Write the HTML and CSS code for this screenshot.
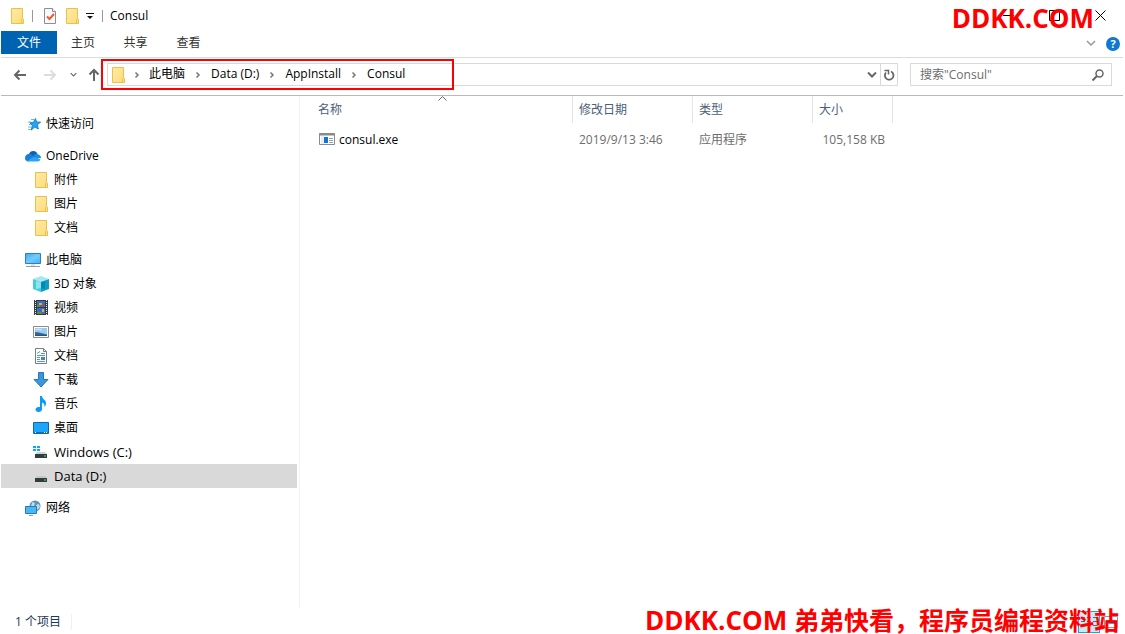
FILE: index.html
```html
<!DOCTYPE html>
<html lang="zh-CN">
<head>
  <meta charset="UTF-8" />
  <meta name="viewport" content="width=device-width, initial-scale=1.0" />
  <title>Consul</title>
  <link rel="stylesheet" href="styles.css">
</head>
<body>
  <svg class="defs" aria-hidden="true">
    <defs>
      <linearGradient id="gFolder" x2="1" y2="1"><stop offset="0" stop-color="#ffeaa6"/><stop offset="1" stop-color="#fcdc7a"/></linearGradient>
      <linearGradient id="gScreen" x2="1" y2="1"><stop offset="0" stop-color="#3aa9f5"/><stop offset="0.5" stop-color="#72cbff"/><stop offset="1" stop-color="#45b0f7"/></linearGradient>
    </defs>
    <symbol id="folder" viewBox="0 0 16 16">
      <path d="M2.500.5h11v9.500l.5 1v4.500H2.500z" fill="url(#gFolder)" stroke="#e8c24a"/>
      <path d="M12.500 15.500v-4l1-1 1 1v4z" fill="#fbe08a" stroke="#e8c24a"/>
    </symbol>
    <symbol id="crumb" viewBox="0 0 6 8">
      <path d="M1.500 1.500 4 4 1.500 6.500" fill="none" stroke="#777" stroke-width="1.500"/>
    </symbol>
    <symbol id="down" viewBox="0 0 10 6">
      <path d="M1 1l4 4 4-4" fill="none" stroke="currentColor" stroke-width="1.500"/>
    </symbol>
  </svg>

  <div class="window">
    <header class="titlebar">
      <svg class="icon"><use href="#folder"/></svg>
      <span class="bar"></span>
      <button class="quick" aria-label="属性">
        <svg class="icon" viewBox="0 0 16 16">
          <path d="M2.500.5h8l3 3v12h-11z" fill="#f7f9fc" stroke="#8a8f96"/>
          <path d="M10.500.5v3h3" fill="#fff" stroke="#8a8f96"/>
          <path d="M5 8.500l2.500 2.500L12 6" fill="none" stroke="#f05a28" stroke-width="2"/>
        </svg>
      </button>
      <button class="quick" aria-label="新建文件夹"><svg class="icon"><use href="#folder"/></svg></button>
      <button class="quick custom" aria-label="自定义快速访问工具栏">
        <svg width="8" height="8" viewBox="0 0 8 8"><path d="M0 .5h8" stroke="#111"/><path d="M1 3h6L4 6z" fill="#111"/></svg>
      </button>
      <span class="bar bar-title"></span>
      <h1 class="caption">Consul</h1>
      <div class="controls">
        <button aria-label="最小化"><svg width="11" height="11" viewBox="0 0 11 11"><path d="M0 5.500h11" stroke="#000"/></svg></button>
        <button aria-label="最大化"><svg width="11" height="11" viewBox="0 0 11 11"><path d="M.5.5h10v10H.5z" fill="none" stroke="#000"/></svg></button>
        <button aria-label="关闭"><svg width="11" height="11" viewBox="0 0 11 11"><path d="M.5.5l10 10M10.500.5l-10 10" stroke="#000"/></svg></button>
      </div>
    </header>

    <nav class="ribbon">
      <button class="tab active">文件</button>
      <button class="tab">主页</button>
      <button class="tab">共享</button>
      <button class="tab">查看</button>
      <button class="expand" aria-label="展开功能区"><svg width="10" height="6"><use href="#down"/></svg></button>
      <button class="help" aria-label="帮助">?</button>
    </nav>

    <div class="navrow">
      <button class="arrow back" aria-label="后退"><svg width="14" height="12" viewBox="0 0 14 12"><path d="M13 6H2M6.500 1.500L2 6l4.500 4.500" fill="none" stroke="currentColor" stroke-width="2"/></svg></button>
      <button class="arrow forward" aria-label="前进" disabled><svg width="14" height="12" viewBox="0 0 14 12"><path d="M1 6h11M7.500 1.500L12 6l-4.500 4.500" fill="none" stroke="currentColor" stroke-width="2"/></svg></button>
      <button class="arrow recent" aria-label="最近浏览的位置"><svg width="7" height="5"><use href="#down"/></svg></button>
      <button class="arrow up" aria-label="向上"><svg width="12" height="14" viewBox="0 0 12 14"><path d="M6 13V2M1.500 6.500L6 2l4.500 4.500" fill="none" stroke="currentColor" stroke-width="2"/></svg></button>
      <div class="address">
        <svg class="icon"><use href="#folder"/></svg>
        <svg class="sep"><use href="#crumb"/></svg>
        <a href="#">此电脑</a>
        <svg class="sep"><use href="#crumb"/></svg>
        <a href="#">Data (D:)</a>
        <svg class="sep"><use href="#crumb"/></svg>
        <a href="#">AppInstall</a>
        <svg class="sep"><use href="#crumb"/></svg>
        <a href="#">Consul</a>
        <button class="history" aria-label="以前的位置"><svg width="10" height="6" viewBox="0 0 10 6"><path d="M1 .5l4 4 4-4" fill="none" stroke="currentColor" stroke-width="2"/></svg></button>
        <button class="refresh" aria-label="刷新">
          <svg width="12" height="12" viewBox="0 0 12 12"><path d="M8 2.500A4.300 4.300 0 1 1 3 3.500" fill="none" stroke="#666" stroke-width="1.800"/><path d="M1.500 1.500h4v4" fill="none" stroke="#666" stroke-width="1.500"/></svg>
        </button>
        <div class="highlight"></div>
      </div>
      <div class="search">
        <input type="text" aria-label="搜索" placeholder='搜索"Consul"'>
        <svg width="12" height="12" viewBox="0 0 12 12"><circle cx="7.500" cy="4.500" r="3.500" fill="none" stroke="#666" stroke-width="1.500"/><path d="M5 7L.5 11.500" stroke="#666" stroke-width="2"/></svg>
      </div>
    </div>

    <main class="content">
      <aside class="tree">
        <ul>
          <li class="root"><a href="#">
            <svg class="icon" viewBox="0 0 16 16"><path d="M10.500 2.500l1 3.500 4 .2-3.200 2.500 1 4.300-3.500-2-3.500 3 1-4.500-2.500-2.800 3.500-.2z" fill="#2ba4ee" stroke="#1784cf"/><path d="M6 3.500h3M3 6h3M4 8.500h2M3 11h3M3 13.500h3" stroke="#6fb9e8"/></svg>
            快速访问</a></li>
        </ul>
        <ul>
          <li class="root"><a href="#">
            <svg class="icon" viewBox="0 0 16 16"><path d="M4 6a4.500 4.500 0 0 1 8.500 0L14 10H3z" fill="#0a62b8"/><path d="M4 6C1.500 6 0 8 0 10s1.500 3.500 3.500 3.500L9 8.500C7.500 6.500 6 6 4 6z" fill="#1680d6"/><path d="M9 7.500c1-2 3-2.200 4-1 2 .2 3 2 3 3.500l-5 .5z" fill="#1b8de0"/><path d="M2 13l7-4.500 6.500 3c-.5 1.300-1.500 2-3 2h-9z" fill="#2ba5ec"/></svg>
            OneDrive</a></li>
          <li><a href="#"><svg class="icon"><use href="#folder"/></svg>附件</a></li>
          <li><a href="#"><svg class="icon"><use href="#folder"/></svg>图片</a></li>
          <li><a href="#"><svg class="icon"><use href="#folder"/></svg>文档</a></li>
        </ul>
        <ul>
          <li class="root"><a href="#">
            <svg class="icon" viewBox="0 0 16 16"><path d="M.5 1.500h15v10H.5z" fill="url(#gScreen)" stroke="#2f80b8"/><path d="M6 13h4" stroke="#b8c4cc"/><path d="M1 14.500h14" stroke="#8f9ba5"/></svg>
            此电脑</a></li>
          <li><a href="#">
            <svg class="icon" viewBox="0 0 16 16"><path d="M0 3l8-3 8 3-8 3z" fill="#a4e9ef"/><path d="M0 3l8 3v10l-8-3z" fill="#45cbd9"/><path d="M16 3L8 6v10l8-3z" fill="#0b9fc4"/><path d="M3 5l5 1v6l-5 1z" fill="#8ce4eb"/><path d="M8 6l4-1v8l-4-1z" fill="#0787b5"/></svg>
            3D 对象</a></li>
          <li><a href="#">
            <svg class="icon" viewBox="0 0 16 16"><path d="M1 0h14v15H1z" fill="#3a3a3a"/><path d="M2.500 0v15M13.500 0v15" stroke="#e6e6e6" stroke-dasharray="1 1"/><path d="M4 1h8v6H4zM4 8h8v6H4z" fill="#2e6fd0"/><path d="M6 3h3v2H6zM9 9h2v3H9z" fill="#f1a92c"/><path d="M4 5h3v2H4zM4 12h5v2H4z" fill="#5d8f3d"/><path d="M9 4h2v2H9z" fill="#c4403c"/></svg>
            视频</a></li>
          <li><a href="#">
            <svg class="icon" viewBox="0 0 16 16"><path d="M.5 2.500h15v11H.5z" fill="#fff" stroke="#8c8c8c"/><path d="M2 4h12v8H2z" fill="#9acbf3"/><path d="M2 8l4 .5 8 2V12H2z" fill="#34688c"/><path d="M2 11h12v1H2z" fill="#24577a"/><path d="M3 6c2-2 4 0 6 0" fill="none" stroke="#e9f5ff"/></svg>
            图片</a></li>
          <li><a href="#">
            <svg class="icon" viewBox="0 0 16 16"><path d="M2.500.5h8l3 3v12h-11z" fill="#fff" stroke="#7d7d7d"/><path d="M10.500.5v3h3" fill="none" stroke="#7d7d7d"/><path d="M4 5.500l3-2M8 5.500h4M4 7.500h8M4 9.500h3M4 11.500h3M4 13.500h8" stroke="#4f9cc9"/><path d="M8 9h4v3H8z" fill="#4189bd"/></svg>
            文档</a></li>
          <li><a href="#">
            <svg class="icon" viewBox="0 0 16 16"><path d="M5.500.5h5v7h4.500L8 15 1 7.500h4.500z" fill="#3a96dd" stroke="#2678bd"/></svg>
            下载</a></li>
          <li><a href="#">
            <svg class="icon" viewBox="0 0 16 16"><path d="M7 0h2c0 3 4 4 4 7 0 1.500-.5 3-1.500 4 .2-3-1-4-2.500-4.500V13c0 1.700-1.500 3-3.500 3S2.500 15 2.500 13.500 4 11 5.500 11H7z" fill="#0a9bf5"/></svg>
            音乐</a></li>
          <li><a href="#">
            <svg class="icon" viewBox="0 0 16 16"><path d="M.5 2.500h15v11H.5z" fill="#1ea4fb" stroke="#0a69ae"/><path d="M1 12.500h14" stroke="#0872bd"/><path d="M2 12.500h1M11 12.500h1M13 12.500h1" stroke="#fff"/></svg>
            桌面</a></li>
          <li><a href="#" class="en">
            <svg class="icon" viewBox="0 0 16 16"><path d="M0 2h3v2H0zM4 2h3v2H4zM0 5h3v2H0zM4 5h3v2H4z" fill="#0caaf0"/><path d="M4 8h8l2 2.500H2z" fill="#d0d3d5"/><path d="M2 10h12v4H2z" fill="#363b3e"/><path d="M11 12h2" stroke="#42dc7c"/></svg>
            Windows (C:)</a></li>
          <li class="selected"><a href="#" class="en">
            <svg class="icon" viewBox="0 0 16 16"><path d="M4 8h8l2 2.500H2z" fill="#c4c7c9"/><path d="M2 10h12v4H2z" fill="#363b3e"/><path d="M11 12h2" stroke="#42dc7c"/></svg>
            Data (D:)</a></li>
        </ul>
        <ul>
          <li class="root"><a href="#">
            <svg class="icon" viewBox="0 0 16 16"><circle cx="10" cy="6" r="5.500" fill="#5f94b8"/><path d="M7 2l3 1-1 3-3 1zM11 5l3-1 1 3-3 3z" fill="#c2dbe8"/><path d="M.5 6.500h11v7H.5z" fill="#49b7f5" stroke="#1f7db8"/><path d="M4 15.500h4" stroke="#7aa7c2"/></svg>
            网络</a></li>
        </ul>
      </aside>

      <section class="files">
        <svg class="sort" viewBox="0 0 9 5"><path d="M.5 4.500l4-4 4 4" fill="none" stroke="#666"/></svg>
        <table>
          <colgroup><col class="c-name"><col class="c-date"><col class="c-type"><col class="c-size"></colgroup>
          <thead>
            <tr><th>名称</th><th>修改日期</th><th>类型</th><th>大小</th></tr>
          </thead>
          <tbody>
            <tr>
              <td class="name"><div class="file">
                <svg class="icon" viewBox="0 0 16 16"><path d="M.5 1.500h15v11H.5z" fill="#fff" stroke="#858b90"/><path d="M0 2.500h16" stroke="#858b90" stroke-width="2"/><path d="M2 4h3v8H2z" fill="#e8eef3"/><path d="M5 5h4v6H5z" fill="#0a76d8"/><path d="M10 6.500h4M10 8.500h4M10 10.500h4" stroke="#9a9fa4"/></svg>
                consul.exe</div></td>
              <td>2019/9/13 3:46</td>
              <td>应用程序</td>
              <td class="size">105,158 KB</td>
            </tr>
          </tbody>
        </table>
      </section>
    </main>

    <footer class="status">
      <span class="count">1 个项目</span>
      <button class="view on" aria-label="详细信息"><svg width="16" height="14" viewBox="0 0 16 14"><path d="M0 2.500h4M6 2.500h4M12 2.500h4M0 6.500h4M6 6.500h4M12 6.500h4M0 10.500h4M6 10.500h4M12 10.500h4" stroke="#5a6b78"/></svg></button>
      <button class="view" aria-label="大图标"><svg width="14" height="12" viewBox="0 0 14 12"><path d="M.5.5h13v11H.5z" fill="#fff" stroke="#7f9db5"/><path d="M2 4h10v4H2z" fill="#4a9be0"/></svg></button>
    </footer>
  </div>

  <div class="mark mark-top">DDKK.COM</div>
  <div class="mark mark-bottom">DDKK.COM <span>弟弟快看，程序员编程资料站</span></div>
</body>
</html>
```
FILE: styles.css
```css
* { box-sizing: border-box; }
body {
  margin: 0; background: #fff; color: #000; overflow: hidden;
  font-family: "Open Sans", "Noto Sans CJK SC", sans-serif;
  font-size: 12px; line-height: 16px;
}
button { font: inherit; color: inherit; background: none; border: 0; padding: 0; display: flex; align-items: center; justify-content: center; }
a { color: inherit; text-decoration: none; }
ul { list-style: none; margin: 0; padding: 0; }
svg { display: block; flex: none; }
.defs { position: absolute; width: 0; height: 0; }
.icon { width: 16px; height: 16px; }
.en { font-size: 13px; }

.window { display: flex; flex-direction: column; height: 100vh; padding: 0 2px 0 1px; }

/* title bar */
.titlebar { display: flex; align-items: center; height: 31px; padding-left: 8px; }
.bar { width: 1px; height: 12px; background: #999; margin: 0 9px 0 7px; }
.quick { margin-right: 6px; }
.quick.custom { margin: 2px 0 0; }
.bar-title { margin: 0 7px 0 8px; }
.caption { margin: 0; font-size: 12px; font-weight: normal; }
.controls { display: flex; margin-left: auto; }
.controls button { width: 46px; height: 31px; }

/* ribbon tabs */
.ribbon { display: flex; align-items: center; height: 27px; padding-bottom: 3px; border-bottom: 1px solid #dadbdc; color: #333; }
.tab { height: 23px; width: 53px; padding-top: 1px; }
.tab.active { width: 56px; background: #0063b1; color: #fff; }
.tab.active + .tab { width: 52px; }
.expand { margin-left: auto; color: #999; }
.help {
  width: 14px; height: 14px; margin: 2px 3px 0 10px; border-radius: 50%;
  background: #0f78d0; color: #fff; font-size: 11px; font-weight: bold; line-height: 14px;
}

/* address and search */
.navrow { display: flex; align-items: center; height: 38px; padding: 0 11px 4px 12px; border-bottom: 1px solid #b9b9b9; }
.arrow { color: #666; }
.forward { margin-left: 16px; color: #ddd; }
.recent { margin: 0 11px 0 13px; }
.address {
  position: relative; flex: 1; display: flex; align-items: center;
  height: 23px; margin: 0 12px 0 7px; padding-left: 2px; border: 1px solid #d9d9d9;
}
.address a { padding-bottom: 1px; }
.sep { width: 6px; height: 8px; margin: 0 10px; }
.address .icon + .sep { margin: 0 9px 0 8px; }
.history { margin: 0 3px 0 auto; color: #666; }
.refresh { width: 17px; height: 21px; border-left: 1px solid #d9d9d9; }
.highlight { position: absolute; left: -7px; top: -5px; width: 353px; height: 31px; border: 2px solid #f00; }
.search { display: flex; align-items: center; width: 202px; height: 23px; padding: 0 7px 0 9px; border: 1px solid #d9d9d9; }
.search input { flex: 1; min-width: 0; padding: 0; border: 0; outline: 0; font: inherit; }
.search input::placeholder { color: #6d6d6d; opacity: 1; }

/* navigation tree */
.content { flex: 1; display: flex; min-height: 0; }
.tree { width: 299px; padding: 16px 2px 0 0; border-right: 1px solid #f2f2f2; }
.tree ul { margin-bottom: 8px; }
.tree a { display: flex; align-items: center; gap: 5px; height: 24px; padding-left: 32px; }
.tree .root a { padding-left: 24px; }
.tree .selected { background: #d9d9d9; }

/* file list */
.files { position: relative; flex: 1; }
.sort { position: absolute; left: 138px; top: 0; width: 9px; height: 5px; }
table { table-layout: fixed; width: 593px; border-collapse: separate; border-spacing: 0; }
.c-name { width: 273px; }
.c-date, .c-type { width: 120px; }
.c-size { width: 80px; }
th { height: 27px; padding: 0 6px; border-right: 1px solid #e5e5e5; font-weight: normal; text-align: left; color: #4c607a; }
th:first-child { padding-left: 18px; }
td { height: 34px; padding: 0 6px; color: #6d6d6d; white-space: nowrap; }
.name { padding-left: 19px; color: #000; }
.file { display: flex; align-items: center; gap: 4px; }
.size { text-align: right; padding-right: 8px; }

/* status bar */
.status { display: flex; align-items: center; height: 26px; padding: 2px 1px 0 14px; color: #1e395b; }
.count { margin-right: auto; padding-right: 10px; border-right: 1px solid #f0f0f0; }
.view { width: 22px; height: 22px; }
.view.on { background: #cce8f5; border: 1px solid #26a0da; }

/* watermark */
.mark { position: absolute; z-index: 5; color: #f00; font-size: 26px; line-height: 36px; font-weight: bold; white-space: nowrap; pointer-events: none; }
.mark span { font-size: 25px; }
.mark-top { top: 0; right: 31px; }
.mark-bottom { bottom: 0; right: 6px; line-height: 28px; }
```
